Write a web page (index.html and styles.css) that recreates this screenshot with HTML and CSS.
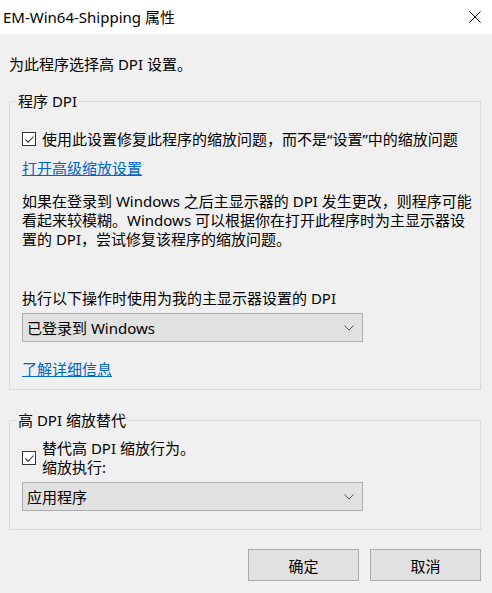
FILE: index.html
```html
<!DOCTYPE html>
<html lang="zh-CN">
<head>
<meta charset="utf-8">
<title>EM-Win64-Shipping 属性</title>
<link rel="stylesheet" href="styles.css">
</head>
<body>
<div class="window">
  <div class="titlebar">
    <span class="title">EM-Win64-Shipping 属性</span>
    <svg class="close" width="12" height="12" viewBox="0 0 12 12"><path d="M0.5 0.5L11.5 11.5M11.5 0.5L0.5 11.5" stroke="#000" stroke-width="1" fill="none"/></svg>
  </div>
  <div class="content">
    <p class="intro">为此程序选择高 DPI 设置。</p>
    <fieldset class="group group-dpi">
      <legend>程序 DPI</legend>
      <div class="check">
        <span class="box"><svg width="11" height="11" viewBox="0 0 11 11"><path d="M1.5 5.5L4.2 8.2L9.5 2.5" stroke="#333" stroke-width="1.1" fill="none"/></svg></span>
        <span>使用此设置修复此程序的缩放问题，而不是“设置”中的缩放问题</span>
      </div>
      <a class="link link-adv">打开高级缩放设置</a>
      <p class="desc">如果在登录到 Windows 之后主显示器的 DPI 发生更改，则程序可能<br>看起来较模糊。Windows 可以根据你在打开此程序时为主显示器设<br>置的 DPI，尝试修复该程序的缩放问题。</p>
      <p class="label">执行以下操作时使用为我的主显示器设置的 DPI</p>
      <div class="select">
        <span>已登录到 Windows</span>
        <svg width="10" height="6" viewBox="0 0 10 6"><path d="M0.5 0.5L5 5L9.5 0.5" stroke="#555" stroke-width="1" fill="none"/></svg>
      </div>
      <a class="link link-more">了解详细信息</a>
    </fieldset>
    <fieldset class="group group-override">
      <legend>高 DPI 缩放替代</legend>
      <div class="check check-two">
        <span class="box"><svg width="11" height="11" viewBox="0 0 11 11"><path d="M1.5 5.5L4.2 8.2L9.5 2.5" stroke="#333" stroke-width="1.1" fill="none"/></svg></span>
        <span class="two-lines">替代高 DPI 缩放行为。<br>缩放执行:</span>
      </div>
      <div class="select select-two">
        <span>应用程序</span>
        <svg width="10" height="6" viewBox="0 0 10 6"><path d="M0.5 0.5L5 5L9.5 0.5" stroke="#555" stroke-width="1" fill="none"/></svg>
      </div>
    </fieldset>
    <div class="buttons">
      <button class="btn">确定</button>
      <button class="btn">取消</button>
    </div>
  </div>
</div>
</body>
</html>
```

FILE: styles.css
```css
* { box-sizing: border-box; }
html, body {
  margin: 0;
  padding: 0;
  background: #f0f0f0;
}
body {
  font-family: "Noto Sans", "Noto Sans CJK SC", sans-serif;
  font-size: 15px;
  line-height: 20px;
  color: #000;
}
.window {
  width: 492px;
  height: 593px;
  background: #f0f0f0;
}
.titlebar {
  height: 34px;
  background: #fff;
  display: flex;
  align-items: center;
  justify-content: space-between;
  padding: 0 11px 0 3px;
}
.title {
  font-size: 15px;
}
.close {
  display: block;
  margin-top: 0;
}
.content {
  padding: 20px 11px 0 9px;
}
.intro {
  margin: 0 0 17px 0;
}
.group {
  margin: 0;
  border: 1px solid #dcdcdc;
  padding: 18px 12px 10px 12px;
  min-width: 0;
}
.group legend {
  padding: 0 2px;
  margin-left: -6px;
  line-height: 20px;
}
.check {
  display: flex;
  align-items: center;
  gap: 6px;
}
.box {
  width: 14px;
  height: 14px;
  border: 1px solid #333;
  background: #fff;
  display: flex;
  align-items: center;
  justify-content: center;
  flex: none;
}
.box svg { display: block; }
.link {
  display: block;
  color: #0066cc;
  text-decoration: underline;
  width: max-content;
}
.link-adv { margin-top: 9px; }
.desc {
  margin: 14px 0 0 0;
  line-height: 19px;
  white-space: nowrap;
}
.label {
  margin: 39px 0 0 0;
}
.select {
  margin-top: 5px;
  width: 341px;
  height: 29px;
  background: #e1e1e1;
  border: 1px solid #adadad;
  display: flex;
  align-items: center;
  justify-content: space-between;
  padding: 0 8px 0 4px;
}
.select svg { display: block; }
.link-more { margin-top: 17px; }
.group-override {
  margin-top: 20px;
  padding-top: 9px;
  padding-bottom: 18px;
}
.two-lines {
  line-height: 19px;
}
.buttons {
  display: flex;
  justify-content: flex-end;
  gap: 11px;
  margin-top: 19px;
}
.btn {
  width: 111px;
  height: 32px;
  background: #e1e1e1;
  border: 1px solid #adadad;
  font-family: inherit;
  font-size: 15px;
  color: #000;
  padding: 0;
}
```
